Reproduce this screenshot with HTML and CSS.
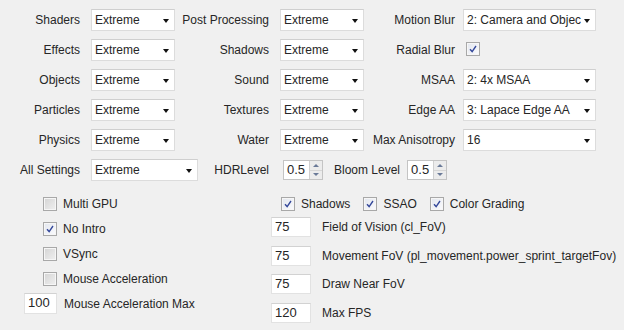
FILE: index.html
```html
<!DOCTYPE html>
<html lang="en">
<head>
  <meta charset="UTF-8">
  <title>Graphics Settings</title>
  <link rel="stylesheet" href="styles.css">
</head>
<body>
  <div class="panel">
    <div class="top-grid">
      <label class="lbl">Shaders</label>
      <div class="combo"><span>Extreme</span><i class="arrow"></i></div>
      <label class="lbl">Post Processing</label>
      <div class="combo"><span>Extreme</span><i class="arrow"></i></div>
      <label class="lbl lbl-r">Motion Blur</label>
      <div class="combo"><span>2: Camera and Objec</span><i class="arrow"></i></div>

      <label class="lbl">Effects</label>
      <div class="combo"><span>Extreme</span><i class="arrow"></i></div>
      <label class="lbl">Shadows</label>
      <div class="combo"><span>Extreme</span><i class="arrow"></i></div>
      <label class="lbl lbl-r">Radial Blur</label>
      <div class="cell-check"><span class="box checked"><svg viewBox="0 0 14 14"><path d="M3.5 7.2 L6 10 L10.5 3.5" /></svg></span></div>

      <label class="lbl">Objects</label>
      <div class="combo"><span>Extreme</span><i class="arrow"></i></div>
      <label class="lbl">Sound</label>
      <div class="combo"><span>Extreme</span><i class="arrow"></i></div>
      <label class="lbl lbl-r">MSAA</label>
      <div class="combo"><span>2: 4x MSAA</span><i class="arrow"></i></div>

      <label class="lbl">Particles</label>
      <div class="combo"><span>Extreme</span><i class="arrow"></i></div>
      <label class="lbl">Textures</label>
      <div class="combo"><span>Extreme</span><i class="arrow"></i></div>
      <label class="lbl lbl-r">Edge AA</label>
      <div class="combo"><span>3: Lapace Edge AA</span><i class="arrow"></i></div>

      <label class="lbl">Physics</label>
      <div class="combo"><span>Extreme</span><i class="arrow"></i></div>
      <label class="lbl">Water</label>
      <div class="combo"><span>Extreme</span><i class="arrow"></i></div>
      <label class="lbl lbl-r">Max Anisotropy</label>
      <div class="combo"><span>16</span><i class="arrow"></i></div>

      <label class="lbl">All Settings</label>
      <div class="combo combo-wide"><span>Extreme</span><i class="arrow"></i></div>
      <label class="lbl">HDRLevel</label>
      <div class="spin-row">
        <div class="spin"><span class="val">0.5</span><div class="spin-btns"><i class="up"></i><i class="down"></i></div></div>
        <span class="spin-lbl">Bloom Level</span>
        <div class="spin"><span class="val">0.5</span><div class="spin-btns"><i class="up"></i><i class="down"></i></div></div>
      </div>
    </div>

    <div class="bottom">
      <div class="col-left">
        <div class="check-row"><span class="box"></span><span>Multi GPU</span></div>
        <div class="check-row"><span class="box checked"><svg viewBox="0 0 14 14"><path d="M3.5 7.2 L6 10 L10.5 3.5" /></svg></span><span>No Intro</span></div>
        <div class="check-row"><span class="box"></span><span>VSync</span></div>
        <div class="check-row"><span class="box"></span><span>Mouse Acceleration</span></div>
        <div class="field-row field-left"><span class="text-box small">100</span><span>Mouse Acceleration Max</span></div>
      </div>
      <div class="col-right">
        <div class="check-line">
          <div class="check-item"><span class="box checked"><svg viewBox="0 0 14 14"><path d="M3.5 7.2 L6 10 L10.5 3.5" /></svg></span><span>Shadows</span></div>
          <div class="check-item"><span class="box checked"><svg viewBox="0 0 14 14"><path d="M3.5 7.2 L6 10 L10.5 3.5" /></svg></span><span>SSAO</span></div>
          <div class="check-item"><span class="box checked"><svg viewBox="0 0 14 14"><path d="M3.5 7.2 L6 10 L10.5 3.5" /></svg></span><span>Color Grading</span></div>
        </div>
        <div class="fields">
          <div class="field-row"><span class="text-box">75</span><span>Field of Vision (cl_FoV)</span></div>
          <div class="field-row"><span class="text-box">75</span><span>Movement FoV (pl_movement.power_sprint_targetFov)</span></div>
          <div class="field-row"><span class="text-box">75</span><span>Draw Near FoV</span></div>
          <div class="field-row"><span class="text-box">120</span><span>Max FPS</span></div>
        </div>
      </div>
    </div>
  </div>
</body>
</html>
```

FILE: styles.css
```css
body {
  margin: 0;
  font-family: 'Liberation Sans', Arial, sans-serif;
  font-size: 12px;
  color: #262626;
  background-color: #f0f0f0;
}

.panel {
  width: 624px;
  height: 330px;
  overflow: hidden;
}

/* top block of combo boxes */
.top-grid {
  display: grid;
  grid-template-columns: 91px 84px 105px 84px 99px 133px;
  grid-auto-rows: 22px;
  row-gap: 8px;
  padding-top: 9px;
  align-items: center;
}

.lbl {
  text-align: right;
  padding-right: 11px;
  white-space: nowrap;
}

.lbl-r {
  padding-right: 8px;
}

.combo {
  height: 22px;
  box-sizing: border-box;
  background-color: #fff;
  border: 1px solid #dcdcdc;
  border-top-color: #cfcfcf;
  display: flex;
  align-items: center;
  justify-content: space-between;
  padding: 0 5px 0 3px;
  white-space: nowrap;
}

.combo-wide {
  width: 107px;
}

.arrow {
  display: block;
  width: 0;
  height: 0;
  margin-top: 2px;
  border-left: 3.5px solid transparent;
  border-right: 3.5px solid transparent;
  border-top: 4px solid #111;
}

.cell-check {
  display: flex;
  align-items: center;
  padding-left: 3px;
  margin-top: -3px;
}

/* spin boxes */
.spin-row {
  grid-column: 4 / span 3;
  display: flex;
  align-items: center;
  padding-left: 3px;
}

.spin {
  width: 40px;
  height: 20px;
  box-sizing: border-box;
  border: 1px solid #c4c4c4;
  background-color: #fff;
  display: flex;
}

.spin .val {
  flex: 1;
  padding-left: 3px;
  line-height: 18px;
  font-size: 13px;
}

.spin-btns {
  width: 12px;
  display: flex;
  flex-direction: column;
  border-left: 1px solid #d0d0d0;
  background-color: #ececec;
}

.spin-btns i {
  flex: 1;
  display: flex;
  align-items: center;
  justify-content: center;
}

.spin-btns .up {
  border-bottom: 1px solid #d6d6d6;
}

.spin-btns .up::after,
.spin-btns .down::after {
  content: '';
  border-left: 3px solid transparent;
  border-right: 3px solid transparent;
}

.spin-btns .up::after {
  border-bottom: 3px solid #6a7a98;
}

.spin-btns .down::after {
  border-top: 3px solid #6a7a98;
}

.spin-lbl {
  margin: 0 7px 0 11px;
}

/* checkboxes */
.box {
  width: 14px;
  height: 14px;
  box-sizing: border-box;
  flex-shrink: 0;
  border: 1px solid #a8a8a8;
  background: linear-gradient(135deg, #d4d4d4, #f0f0f0);
  box-shadow: inset 0 0 0 1px #f6f6f6;
  display: block;
}

.box.checked {
  background: linear-gradient(135deg, #e2e6ee, #fbfbfd);
}

.box svg {
  display: block;
  width: 12px;
  height: 12px;
}

.box path {
  fill: none;
  stroke: #34489a;
  stroke-width: 1.6;
}

/* bottom block */
.bottom {
  display: grid;
  grid-template-columns: 270px 1fr;
  margin-top: 10px;
}

.col-left {
  padding-left: 24px;
  display: flex;
  flex-direction: column;
}

.check-row {
  height: 25px;
  display: flex;
  align-items: center;
  gap: 6px;
  padding-left: 19px;
}

.field-row {
  height: 20px;
  display: flex;
  align-items: center;
  gap: 11px;
  white-space: nowrap;
}

.field-left {
  height: 21px;
  margin-top: 2px;
  gap: 7px;
}

.text-box {
  width: 40px;
  height: 20px;
  box-sizing: border-box;
  background-color: #fff;
  border: 1px solid #e2e2e2;
  border-top-color: #d2d2d2;
  padding-left: 3px;
  line-height: 18px;
  font-size: 13px;
}

.text-box.small {
  width: 33px;
  height: 21px;
}

.col-right {
  padding-left: 1px;
}

.check-line {
  height: 25px;
  display: flex;
  align-items: center;
  padding-left: 10px;
  gap: 13px;
}

.check-item {
  display: flex;
  align-items: center;
  gap: 6px;
}

.fields {
  display: flex;
  flex-direction: column;
  gap: 8.7px;
  margin-top: 1px;
}
```
